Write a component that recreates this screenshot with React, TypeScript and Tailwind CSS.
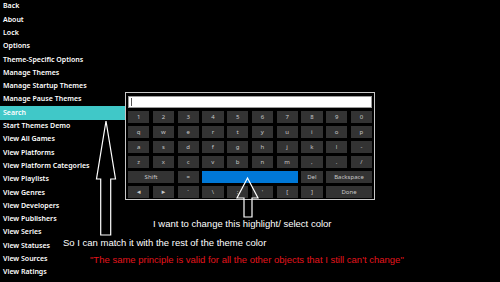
const menu = [
  "Back",
  "About",
  "Lock",
  "Options",
  "Theme-Specific Options",
  "Manage Themes",
  "Manage Startup Themes",
  "Manage Pause Themes",
  "Search",
  "Start Themes Demo",
  "View All Games",
  "View Platforms",
  "View Platform Categories",
  "View Playlists",
  "View Genres",
  "View Developers",
  "View Publishers",
  "View Series",
  "View Statuses",
  "View Sources",
  "View Ratings",
]

type Key = { label: string; span?: number; active?: boolean }

const rows: Key[][] = [
  "1234567890".split("").map((c) => ({ label: c })),
  "qwertyuiop".split("").map((c) => ({ label: c })),
  "asdfghjkl-".split("").map((c) => ({ label: c })),
  "zxcvbnm,./".split("").map((c) => ({ label: c })),
  [
    { label: "Shift", span: 2 },
    { label: "=" },
    { label: "", span: 4, active: true },
    { label: "Del" },
    { label: "Backspace", span: 2 },
  ],
  [
    { label: "◄" },
    { label: "►" },
    { label: "`" },
    { label: "\\" },
    { label: ";" },
    { label: "'" },
    { label: "[" },
    { label: "]" },
    { label: "Done", span: 2 },
  ],
]

const arial = { fontFamily: "'Liberation Sans', Arial, sans-serif" }

function Keyboard() {
  return (
    <div className="mt-[92px] w-[250px] h-[108px] border border-[#c8c8c8] bg-black px-[2px] pt-[3px]">
      {/* input */}
      <div className="h-[12px] w-full bg-white border border-[#9a9a9a] flex items-center pl-[2px]">
        <div className="w-px h-[8px] bg-[#555]" />
      </div>
      <div className="mt-[3px] grid grid-cols-10 gap-[3.5px]">
        {rows.map((row, r) =>
          row.map((k, i) => (
            <div
              key={r + "-" + i}
              className={
                "h-[11.5px] flex items-center justify-center text-[6px] leading-none " +
                (k.active ? "bg-[#0078d7]" : "bg-[#333333] text-[#c8c8c8]") +
                (k.span === 2 ? " col-span-2" : k.span === 4 ? " col-span-4" : "")
              }
            >
              {k.label}
            </div>
          )),
        )}
      </div>
    </div>
  )
}

export default function App() {
  return (
    <div
      className="relative w-[500px] h-[282px] bg-black overflow-hidden flex"
      style={{ fontFamily: "'Noto Sans', sans-serif" }}
    >
      <ul className="w-[125px] shrink-0 flex flex-col">
        {menu.map((m) => (
          <li
            key={m}
            className={
              "h-[13.3px] flex items-center pl-[3px] text-[7px] font-semibold text-white whitespace-nowrap " +
              (m === "Search" ? "bg-[#40c8c8]" : "")
            }
          >
            {m}
          </li>
        ))}
      </ul>

      <Keyboard />

      {/* annotations drawn over the screenshot */}
      <svg className="absolute inset-0" width="500" height="282" viewBox="0 0 500 282">
        <polygon
          points="106,121 115.5,179 110.7,179 110.7,235 100.7,235 100.7,179 96.5,179"
          fill="none"
          stroke="white"
          strokeWidth="1.2"
        />
        <polygon
          points="247.5,178 258,198 252,198 252,217 244,217 244,198 237,198"
          fill="none"
          stroke="white"
          strokeWidth="1.2"
        />
      </svg>

      <div className="absolute left-[153px] top-[219px] text-[9.5px] leading-none text-white whitespace-nowrap" style={arial}>
        I want to change this highlight/ select color
      </div>
      <div className="absolute left-[63px] top-[238px] text-[9.5px] leading-none text-white whitespace-nowrap" style={arial}>
        So I can match it with the rest of the theme color
      </div>
      <div className="absolute left-[90px] top-[255px] text-[9.5px] leading-none text-[#e3141c] whitespace-nowrap" style={arial}>
        "The same principle is valid for all the other objects that I still can't change"
      </div>
    </div>
  )
}
